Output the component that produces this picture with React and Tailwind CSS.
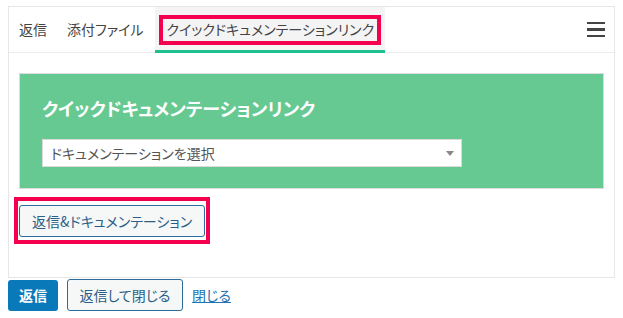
const jp = "font-['Noto_Sans_CJK_JP','Noto_Sans',sans-serif] [font-feature-settings:'palt']";

const Tab = ({ label }) => (
  <div className="h-full flex items-center px-[10px] text-[14px] text-[#444]">{label}</div>
);

export default function App() {
  return (
    <div className={`${jp} bg-white w-[623px] h-[318px] pt-[6px] px-[8px]`}>
      <div className="border border-[#e6e6e6] h-[272px] flex flex-col">
        {/* tabs */}
        <div className="h-[46px] border-b border-[#ececec] flex items-stretch">
          <Tab label="返信" />
          <Tab label="添付ファイル" />
          <div className="ml-[2px] bg-[#f4f4f4] px-[4px] flex items-center border-b-[3px] border-[#1fbf8f] -mb-px">
            <div className="border-[4px] border-[#f5004f] h-[30px] px-[3px] flex items-center text-[14px] text-[#444] mt-[2px]">
              クイックドキュメンテーションリンク
            </div>
          </div>
          <div className="flex-1" />
          <div className="flex flex-col justify-center gap-[4px] pr-[9px]">
            <span className="block w-[18px] h-[2.5px] bg-[#444]" />
            <span className="block w-[18px] h-[2.5px] bg-[#444]" />
            <span className="block w-[18px] h-[2.5px] bg-[#444]" />
          </div>
        </div>

        {/* body */}
        <div className="pt-[20px] px-[10px]">
          <div className="bg-[#66c992] border border-[#dcdcdc] pt-[21px] pb-[21px] px-[22px]">
            <h2 className="text-white font-bold text-[18px] leading-[27px]">クイックドキュメンテーションリンク</h2>
            <div className="mt-[17px] w-[420px] h-[28px] bg-white border border-[#dadada] flex items-center justify-between pl-[8px] pr-[7px]">
              <span className="text-[14px] text-[#555]">ドキュメンテーションを選択</span>
              <svg width="8" height="5" viewBox="0 0 8 5">
                <path d="M0 0h8L4 5z" fill="#888" />
              </svg>
            </div>
          </div>
          <div className="mt-[8px] -ml-[5px] inline-block border-[4px] border-[#f5004f] pt-[4px] pb-[3px] px-[1px]">
            <button className="h-[32px] px-[12px] bg-[#f6f7f7] border border-[#2a6c9c] rounded-[3px] text-[14px] text-[#2b5f87]">
              返信&amp;ドキュメンテーション
            </button>
          </div>
        </div>
      </div>

      {/* footer */}
      <div className="flex items-center gap-[9px] mt-px">
        <button className="h-[31px] w-[50px] bg-[#0a79ba] rounded-[3px] text-white font-bold text-[14px]">返信</button>
        <button className="h-[32px] px-[11.5px] bg-[#f6f7f7] border border-[#2a6c9c] rounded-[3px] text-[14px] text-[#2b5f87]">
          返信して閉じる
        </button>
        <a href="#" className="text-[14px] text-[#2271b1] underline">閉じる</a>
      </div>
    </div>
  );
}
